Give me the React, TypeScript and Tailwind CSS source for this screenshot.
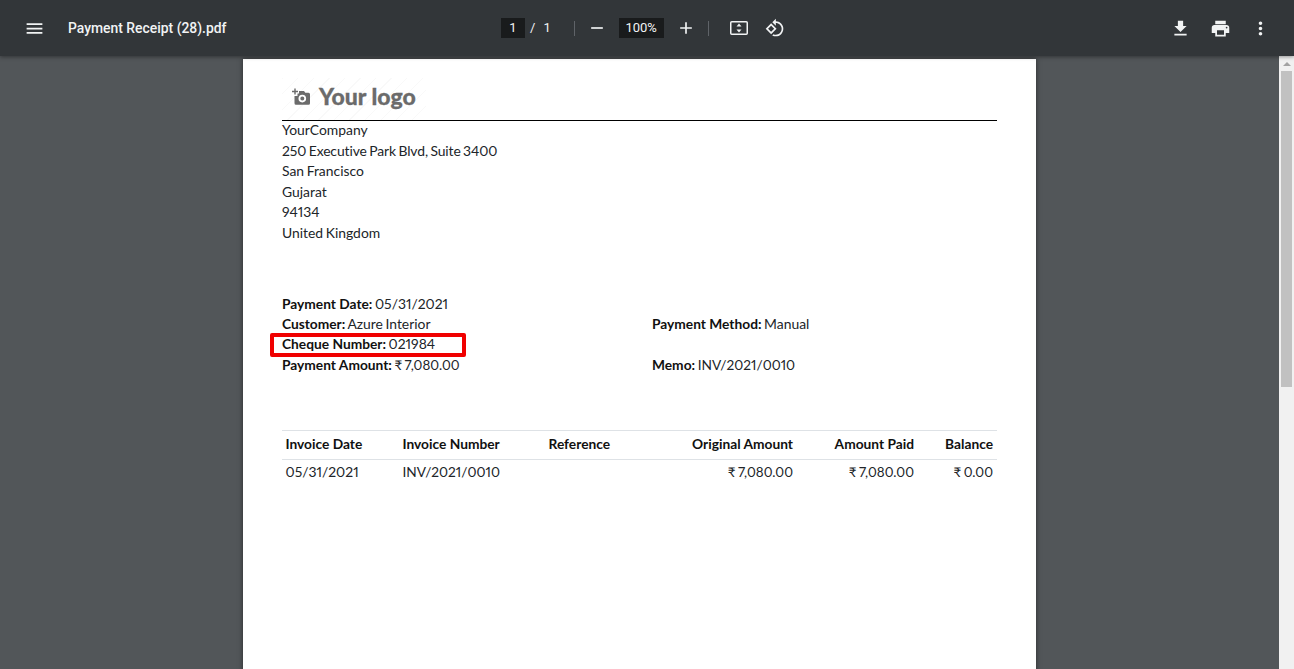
import type { ReactNode } from "react";

function Icon({ d, size = 21, className = "" }: { d: string; size?: number; className?: string }) {
  return (
    <svg width={size} height={size} viewBox="0 0 24 24" fill="currentColor" className={className}>
      <path d={d} />
    </svg>
  );
}

const MENU = "M3 18h18v-2H3v2zm0-5h18v-2H3v2zm0-7v2h18V6H3z";
const MINUS = "M19 13H5v-2h14v2z";
const PLUS = "M19 13h-6v6h-2v-6H5v-2h6V5h2v6h6v2z";
const ROTATE =
  "M7.34 6.41L.86 12.9l6.49 6.48 6.49-6.48-6.5-6.49zM3.69 12.9l3.66-3.66L11 12.9l-3.66 3.66-3.65-3.66zm15.67-6.26C17.61 4.88 15.3 4 13 4V.76L8.76 5 13 9.24V6c1.79 0 3.58.68 4.95 2.05 2.73 2.73 2.73 7.17 0 9.9C16.58 19.32 14.79 20 13 20c-.97 0-1.94-.21-2.84-.61l-1.49 1.49C10.02 21.62 11.51 22 13 22c2.3 0 4.61-.88 6.36-2.64 3.52-3.51 3.52-9.21 0-12.72z";
const DOWNLOAD = "M19 9h-4V3H9v6H5l7 7 7-7zM5 18v2h14v-2H5z";
const PRINT =
  "M19 8H5c-1.66 0-3 1.34-3 3v6h4v4h12v-4h4v-6c0-1.66-1.34-3-3-3zm-3 11H8v-5h8v5zm3-7c-.55 0-1-.45-1-1s.45-1 1-1 1 .45 1 1-.45 1-1 1zm-1-9H6v4h12V3z";
const MORE =
  "M12 8c1.1 0 2-.9 2-2s-.9-2-2-2-2 .9-2 2 .9 2 2 2zm0 2c-1.1 0-2 .9-2 2s.9 2 2 2 2-.9 2-2-.9-2-2-2zm0 6c-1.1 0-2 .9-2 2s.9 2 2 2 2-.9 2-2-.9-2-2-2z";

function FitIcon() {
  return (
    <svg width="20" height="16" viewBox="0 0 20 16" className="ml-[20px]" fill="none">
      <rect x="1.750" y="1.750" width="16.500" height="12.500" rx="1" stroke="currentColor" strokeWidth="1.500" />
      <path d="M10 3.500 12.500 6.500H7.500zM7.500 9.500h5L10 12.500z" fill="currentColor" />
    </svg>
  );
}

function Toolbar() {
  return (
    <header className="relative z-10 flex h-[56px] shrink-0 items-center bg-[#323639] text-[#f1f3f4] shadow-[0_1px_4px_rgba(0,0,0,0.4)] font-['Roboto',sans-serif]">
      {/* File name */}
      <div className="flex w-[501px] shrink-0 items-center">
        <Icon d={MENU} className="ml-[23.500px]" />
        <span className="ml-[23.500px] text-[13.900px] font-medium">Payment Receipt (28).pdf</span>
      </div>

      {/* Page and zoom controls */}
      <div className="flex items-center text-[13px]">
        <span className="flex h-[20px] w-[24px] items-center justify-center bg-[#191b1c]">1</span>
        <span className="ml-[5px]">/</span>
        <span className="ml-[8px]">1</span>
        <span className="ml-[23px] h-[15px] w-px bg-[#5f6368]" />
        <Icon d={MINUS} size={20} className="ml-[12px]" />
        <span className="ml-[12px] flex h-[20px] w-[45px] items-center justify-center bg-[#191b1c]">100%</span>
        <Icon d={PLUS} size={20} className="ml-[12px]" />
        <span className="ml-[12px] h-[15px] w-px bg-[#5f6368]" />
        <FitIcon />
        <Icon d={ROTATE} size={20} className="ml-[16px]" />
      </div>

      {/* Actions */}
      <div className="ml-auto mr-[23.500px] flex items-center gap-[19px]">
        <Icon d={DOWNLOAD} />
        <Icon d={PRINT} />
        <Icon d={MORE} />
      </div>
    </header>
  );
}

function Label({ children }: { children: ReactNode }) {
  return <span className="text-[13.750px] font-bold text-[#111] [word-spacing:0]">{children}</span>;
}

function Logo() {
  return (
    <div className="flex h-[62px] items-end border-b border-black">
      <div className="flex h-[42px] w-[144px] items-center pb-[5px] pl-[10px] bg-[repeating-linear-gradient(135deg,#f9f9f9_0,#f9f9f9_1px,#ffffff_1px,#ffffff_11px)]">
        <svg width="18" height="17" viewBox="0 0 18 17" fill="#6b6b6b">
          <path d="M2.300 0.500h1.400v2.300H6v1.400H3.700v2.300H2.300V4.200H0V2.800h2.300z" />
          <path
            fillRule="evenodd"
            d="M7 3h5l1.300 1.800H16.500a1.500 1.500 0 0 1 1.500 1.500v9A1.500 1.500 0 0 1 16.500 16.800H4A1.500 1.500 0 0 1 2.500 15.300V8h3V5.500H7zM10.300 6.800a3.800 3.800 0 1 0 0 7.600 3.800 3.800 0 0 0 0-7.600zm0 1.800a2 2 0 1 1 0 4 2 2 0 0 1 0-4z"
          />
        </svg>
        <span className="ml-[9px] text-[23px] font-black leading-none text-[#6b6b6b] [word-spacing:0] [-webkit-text-stroke:0.3px_#6b6b6b] font-['Lato',sans-serif]">
          Your logo
        </span>
      </div>
    </div>
  );
}

function InvoiceTable() {
  const headers = [
    { name: "Invoice Date", cls: "w-[117px] pl-[3.500px] text-left" },
    { name: "Invoice Number", cls: "w-[146px] pl-[3.500px] text-left" },
    { name: "Reference", cls: "w-[111px] pl-[3.500px] text-left" },
    { name: "Original Amount", cls: "w-[141px] pr-[4px] text-right" },
    { name: "Amount Paid", cls: "w-[121px] pr-[4px] text-right" },
    { name: "Balance", cls: "w-[79px] pr-[4px] text-right" },
  ];
  return (
    <table className="mt-[54.500px] w-[715px] table-fixed border-collapse">
      <thead>
        <tr className="h-[29px] border-y border-[#dee2e6]">
          {headers.map((h) => (
            <th key={h.name} className={`${h.cls} text-[13.750px] font-bold text-[#111] [word-spacing:0]`}>
              {h.name}
            </th>
          ))}
        </tr>
      </thead>
      <tbody>
        <tr className="h-[26px]">
          <td className="pl-[3.500px] pb-[1px]">05/31/2021</td>
          <td className="pl-[3.500px] pb-[1px] text-[13.700px]">INV/2021/0010</td>
          <td />
          <td className="pr-[4px] pb-[1px] text-right text-[13.400px]">₹ 7,080.00</td>
          <td className="pr-[4px] pb-[1px] text-right text-[13.400px]">₹ 7,080.00</td>
          <td className="pr-[4px] pb-[1px] text-right text-[13.400px]">₹ 0.00</td>
        </tr>
      </tbody>
    </table>
  );
}

function Page() {
  return (
    <div className="mt-[3px] h-[700px] w-[793px] shrink-0 bg-white pl-[39px] pr-[39px] text-[13.900px] leading-[20.500px] text-[#212529] proportional-nums [word-spacing:-1px] [font-variant-ligatures:none] shadow-[0_0_5px_rgba(0,0,0,0.5)] font-['Lato',sans-serif]">
      <Logo />
      <div className="-mt-px">
        <div>YourCompany</div>
        <div className="tracking-[-0.1px]">250 Executive Park Blvd, Suite 3400</div>
        <div>San Francisco</div>
        <div>Gujarat</div>
        <div>94134</div>
        <div>United Kingdom</div>
      </div>

      <div className="mt-[50.500px] grid grid-cols-[370px_345px] leading-[20.400px]">
        <div>
          <Label>Payment Date:</Label> 05/31/2021
        </div>
        <div />
        <div>
          <Label>Customer:</Label> Azure Interior
        </div>
        <div>
          <Label>Payment Method:</Label> Manual
        </div>
        <div className="relative">
          <Label>Cheque Number:</Label> 021984
          <span className="absolute -left-[12px] -top-[1px] h-[24px] w-[196px] rounded-[2px] border-[4px] border-[#f00000]" />
        </div>
        <div />
        <div>
          <Label>Payment Amount:</Label> <span className="text-[13.400px]">₹ 7,080.00</span>
        </div>
        <div>
          <Label>Memo:</Label> <span className="text-[13.700px]">INV/2021/0010</span>
        </div>
      </div>

      <InvoiceTable />
    </div>
  );
}

function Scrollbar() {
  return (
    <div className="flex w-[15px] shrink-0 flex-col items-center bg-[#f1f1f1]">
      <div className="flex h-[15px] w-full items-center justify-center">
        <span className="h-0 w-0 border-x-[4px] border-b-[4px] border-x-transparent border-b-[#a3a3a3]" />
      </div>
      <div className="h-[316px] w-[11px] bg-[#c1c1c1]" />
    </div>
  );
}

export default function App() {
  return (
    <div className="flex h-[669px] w-[1294px] flex-col overflow-hidden bg-[#525659]">
      <Toolbar />
      <main className="flex min-h-0 flex-1">
        <div className="flex min-w-0 flex-1 justify-center overflow-hidden">
          <Page />
        </div>
        <Scrollbar />
      </main>
    </div>
  );
}
